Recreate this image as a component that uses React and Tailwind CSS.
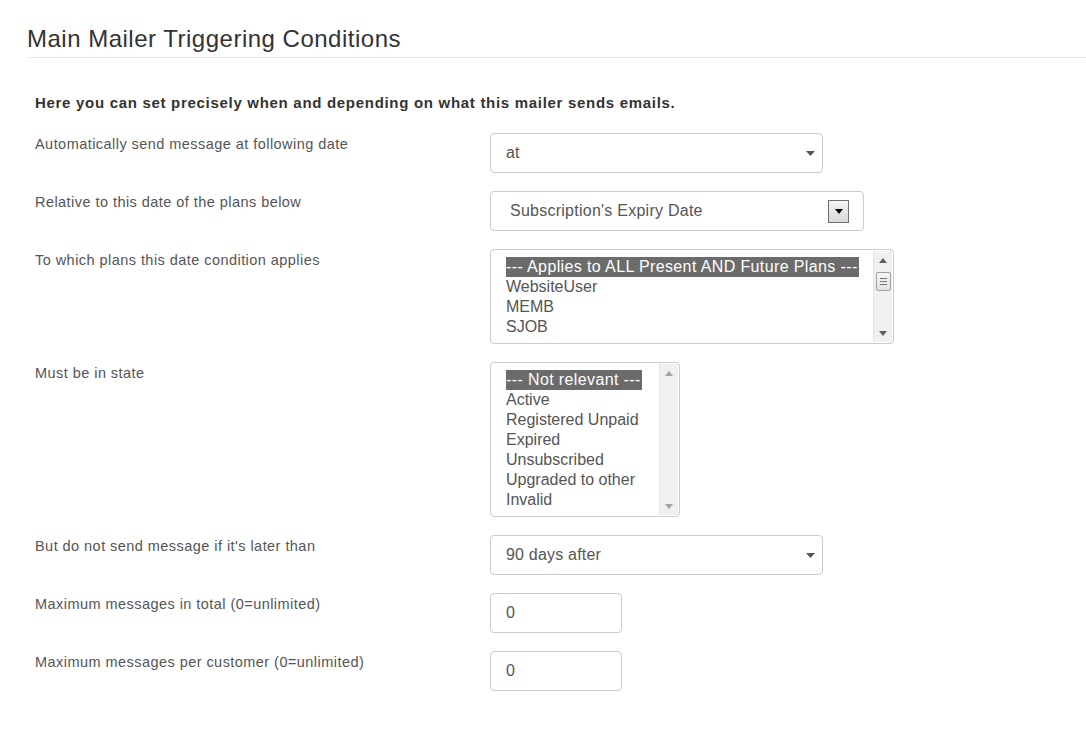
import React from "react";

const font = { fontFamily: "'Liberation Sans', Arial, sans-serif" };

function Caret() {
  return (
    <svg width="9" height="5" viewBox="0 0 9 5" className="shrink-0">
      <path d="M0 0h9L4.5 5z" fill="#555" />
    </svg>
  );
}

function Select({ value, width }) {
  return (
    <div className={`${width} h-[40px] flex items-center justify-between pl-[15px] pr-[7px] border border-[#ccc] rounded-[4px] bg-white text-[16px] tracking-[0.2px] text-[#555]`}>
      <span>{value}</span>
      <Caret />
    </div>
  );
}

function OldSelect({ value }) {
  return (
    <div className="w-[374px] h-[40px] flex items-center justify-between pl-[19px] pr-[14px] border border-[#ccc] rounded-[4px] bg-white text-[16px] tracking-[0.25px] text-[#555]">
      <span>{value}</span>
      <div className="w-[21px] h-[23px] border border-[#707070] bg-gradient-to-b from-[#f4f4f4] to-[#d8d8d8] flex items-center justify-center">
        <svg width="8" height="5" viewBox="0 0 8 5">
          <path d="M0 0h8L4 5z" fill="#000" />
        </svg>
      </div>
    </div>
  );
}

function Scrollbar({ thumb }) {
  const arrow = thumb ? "#606060" : "#a3a3a3";
  return (
    <div className="w-[19px] h-full bg-[#f0f0f0] border-l border-[#e4e4e4] flex flex-col items-center pt-[7px] pb-[6px]">
      <svg width="8" height="5" viewBox="0 0 8 5">
        <path d="M4 0l4 5H0z" fill={arrow} />
      </svg>
      {thumb && (
        <div className="mt-[9px] w-[15px] h-[19px] border border-[#a0a0a0] rounded-[2px] bg-gradient-to-b from-[#f6f6f6] to-[#e2e2e2] flex flex-col items-center justify-center gap-[2px]">
          <div className="w-[7px] h-px bg-[#777]" />
          <div className="w-[7px] h-px bg-[#777]" />
          <div className="w-[7px] h-px bg-[#777]" />
        </div>
      )}
      <div className="flex-1" />
      <svg width="8" height="5" viewBox="0 0 8 5">
        <path d="M0 0h8L4 5z" fill={arrow} />
      </svg>
    </div>
  );
}

function MultiSelect({ items, width, height, thumb }) {
  return (
    <div className={`${width} ${height} flex border border-[#ccc] rounded-[4px] bg-white overflow-hidden`}>
      <div className="flex-1 pl-[15px] pt-[7px] text-[16px] leading-[20px] text-[#555]">
        {items.map((it, i) => (
          <div key={it} className={i === 0 ? "w-fit bg-[#6b6b6b] text-white pr-[1px] tracking-[0.38px]" : ""}>
            {it}
          </div>
        ))}
      </div>
      <div className="pr-px py-px">
        <Scrollbar thumb={thumb} />
      </div>
    </div>
  );
}

function Input({ value }) {
  return (
    <div className="w-[132px] h-[40px] flex items-center pl-[15px] border border-[#ccc] rounded-[4px] bg-white text-[16px] text-[#555]">
      {value}
    </div>
  );
}

function Row({ label, children }) {
  return (
    <div className="flex">
      <div className="w-[455px] pt-px text-[14.5px] leading-[20px] tracking-[0.45px] text-[#555]">{label}</div>
      <div>{children}</div>
    </div>
  );
}

export default function App() {
  return (
    <div className="w-[1086px] h-[729px] bg-white overflow-hidden" style={font}>
      <div className="pl-[27px] pt-[25px]">
        <h2 className="text-[24px] leading-[28px] tracking-[0.5px] text-[#333] pb-[4px] border-b border-[#e8e8e8]">
          Main Mailer Triggering Conditions
        </h2>
      </div>
      <div className="pl-[35px] pt-[35px]">
        <p className="text-[15px] leading-[20px] font-bold tracking-[0.7px] text-[#333]">
          Here you can set precisely when and depending on what this mailer sends emails.
        </p>
        <div className="mt-[20px] flex flex-col gap-[18px]">
          <Row label="Automatically send message at following date">
            <Select value="at" width="w-[333px]" />
          </Row>
          <Row label="Relative to this date of the plans below">
            <OldSelect value="Subscription's Expiry Date" />
          </Row>
          <Row label="To which plans this date condition applies">
            <MultiSelect
              width="w-[404px]"
              height="h-[95px]"
              thumb
              items={["--- Applies to ALL Present AND Future Plans ---", "WebsiteUser", "MEMB", "SJOB"]}
            />
          </Row>
          <Row label="Must be in state">
            <MultiSelect
              width="w-[190px]"
              height="h-[155px]"
              items={["--- Not relevant ---", "Active", "Registered Unpaid", "Expired", "Unsubscribed", "Upgraded to other", "Invalid"]}
            />
          </Row>
          <Row label="But do not send message if it's later than">
            <Select value="90 days after" width="w-[333px]" />
          </Row>
          <Row label="Maximum messages in total (0=unlimited)">
            <Input value="0" />
          </Row>
          <Row label="Maximum messages per customer (0=unlimited)">
            <Input value="0" />
          </Row>
        </div>
      </div>
    </div>
  );
}
